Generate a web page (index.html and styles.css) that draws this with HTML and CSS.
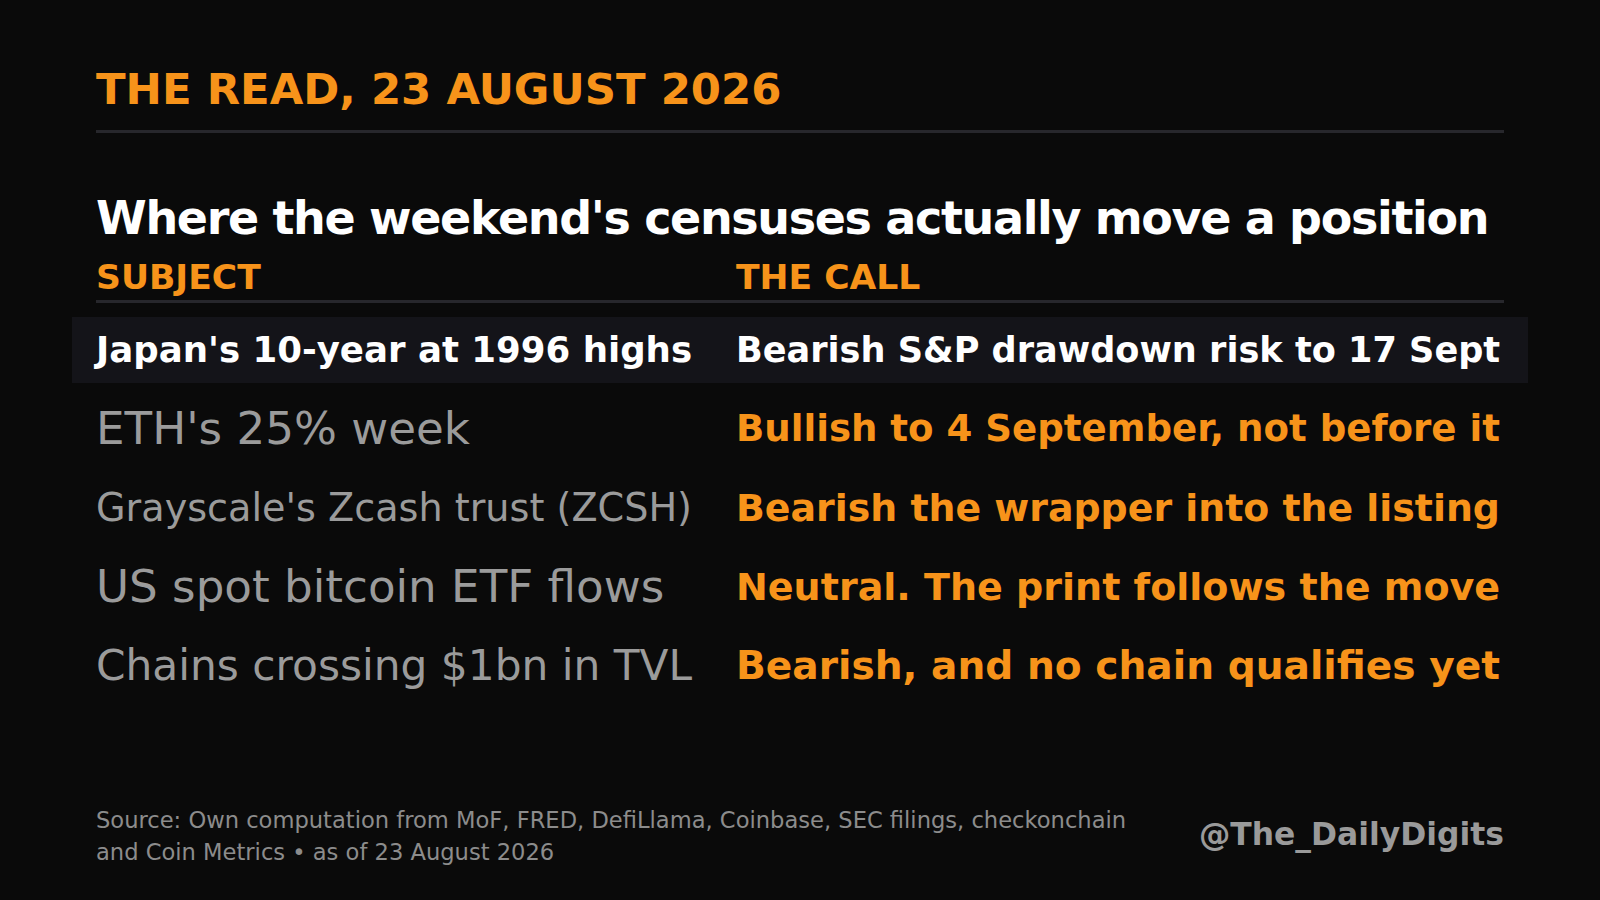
FILE: index.html
```html
<!DOCTYPE html>
<html lang="en">
<head>
<meta charset="utf-8">
<title>The Read, 23 August 2026</title>
<link rel="stylesheet" href="styles.css">
</head>
<body>
<main class="page">
  <header class="masthead">
    <h1 class="title">THE READ, 23 AUGUST 2026</h1>
  </header>
  <h2 class="headline">Where the weekend's censuses actually move a position</h2>
  <section class="table">
    <div class="thead">
      <div class="th">SUBJECT</div>
      <div class="th">THE CALL</div>
    </div>
    <div class="tbody">
      <div class="row row-hl">
        <div class="cell"><span class="fit subj subj-hl" data-max="45.2">Japan's 10-year at 1996 highs</span></div>
        <div class="cell"><span class="fit call call-hl" data-max="45.2">Bearish S&amp;P drawdown risk to 17 Sept</span></div>
      </div>
      <div class="row">
        <div class="cell"><span class="fit subj" data-max="45.2">ETH's 25% week</span></div>
        <div class="cell"><span class="fit call" data-max="45.2">Bullish to 4 September, not before it</span></div>
      </div>
      <div class="row">
        <div class="cell"><span class="fit subj" data-max="45.2">Grayscale's Zcash trust (ZCSH)</span></div>
        <div class="cell"><span class="fit call" data-max="45.2">Bearish the wrapper into the listing</span></div>
      </div>
      <div class="row">
        <div class="cell"><span class="fit subj" data-max="45.2">US spot bitcoin ETF flows</span></div>
        <div class="cell"><span class="fit call" data-max="45.2">Neutral. The print follows the move</span></div>
      </div>
      <div class="row">
        <div class="cell"><span class="fit subj" data-max="45.2">Chains crossing $1bn in TVL</span></div>
        <div class="cell"><span class="fit call" data-max="45.2">Bearish, and no chain qualifies yet</span></div>
      </div>
    </div>
  </section>
  <footer class="footer">
    <p class="source">Source: Own computation from MoF, FRED, DefiLlama, Coinbase, SEC filings, checkonchain and Coin Metrics • as of 23 August 2026</p>
    <div class="handle">@The_DailyDigits</div>
  </footer>
</main>
<script src="script.js"></script>
</body>
</html>
```

FILE: styles.css
```css
* { box-sizing: border-box; }

html, body {
  margin: 0;
  padding: 0;
  background: #0a0a0a;
}

body {
  font-family: "DejaVu Sans", "Noto Sans", sans-serif;
  color: #ffffff;
}

.page {
  width: 1600px;
  height: 900px;
  padding: 63px 96px 32px;
  display: flex;
  flex-direction: column;
}

.masthead {
  padding-bottom: 15px;
  border-bottom: 3px solid #27272c;
}

.title {
  margin: 0;
  font-size: 43.4px;
  line-height: 52px;
  font-weight: 700;
  color: #f7931a;
}

.headline {
  margin: 57px 0 0;
  font-size: 46px;
  line-height: 56px;
  font-weight: 700;
  letter-spacing: -1.35px;
  color: #ffffff;
  white-space: nowrap;
}

.table {
  margin-top: 10px;
}

.thead {
  display: grid;
  grid-template-columns: 600px 1fr;
  column-gap: 40px;
  padding-bottom: 1px;
  border-bottom: 3px solid #27272c;
}

.th {
  font-size: 34.6px;
  line-height: 43px;
  font-weight: 700;
  color: #f7931a;
}

.tbody {
  margin-top: 14px;
  display: flex;
  flex-direction: column;
  gap: 13px;
}

.row {
  display: grid;
  grid-template-columns: 600px 1fr;
  column-gap: 40px;
  height: 66px;
  align-items: center;
  margin: 0 -24px;
  padding: 0 24px;
}

.row-hl {
  background: #141419;
}

.cell {
  min-width: 0;
  white-space: nowrap;
  line-height: 1.164;
}

.fit {
  display: inline-block;
  white-space: nowrap;
  vertical-align: middle;
}

.subj {
  font-size: 44px;
  font-weight: 400;
  color: #9b9b9b;
}

.subj-hl {
  font-size: 36px;
  font-weight: 700;
  color: #ffffff;
}

.call {
  font-size: 35px;
  font-weight: 700;
  color: #f7931a;
}

.call-hl {
  color: #ffffff;
}

.footer {
  margin-top: auto;
  display: flex;
  align-items: center;
  justify-content: space-between;
}

.source {
  margin: 0;
  max-width: 1070px;
  font-size: 22.6px;
  line-height: 32px;
  color: #8c8c8c;
}

.handle {
  padding-bottom: 5px;
  font-size: 31.4px;
  line-height: 36px;
  font-weight: 700;
  color: #9a9a9a;
  white-space: nowrap;
}
```

FILE: script.js
```js
(function () {
  function fit() {
    var els = document.querySelectorAll('.fit');
    for (var i = 0; i < els.length; i++) {
      var el = els[i];
      var max = parseFloat(el.getAttribute('data-max'));
      var avail = el.parentElement.clientWidth - 4;
      el.style.fontSize = max + 'px';
      var w = el.getBoundingClientRect().width;
      if (w > avail) {
        el.style.fontSize = (max * avail / w).toFixed(2) + 'px';
      }
    }
  }
  fit();
  if (document.fonts && document.fonts.ready) {
    document.fonts.ready.then(fit);
  }
  window.addEventListener('load', fit);
})();
```
